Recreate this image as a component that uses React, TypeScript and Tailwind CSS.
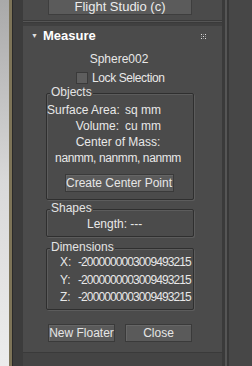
import React from "react";

const font = { fontFamily: '"Liberation Sans", Arial, sans-serif' };

function Group({ title, children, className = "" }: { title: string; children: React.ReactNode; className?: string }) {
  return (
    <div className={`relative ml-[23px] w-[148px] border border-[#2f2f2f] rounded-[2px] shadow-[inset_1px_1px_0_#5c5c5c,1px_1px_0_#5c5c5c] ${className}`}>
      <span className="absolute -top-[9px] left-[3px] bg-[#4b4b4b] px-[1px] leading-[14px] text-[#e4e4e4]">{title}</span>
      {children}
    </div>
  );
}

function Btn({ children, className = "" }: { children: React.ReactNode; className?: string }) {
  return (
    <div className={`h-[18px] bg-[#5a5a5a] border border-[#3a3a3a] shadow-[inset_1px_1px_0_#666] flex items-center justify-center text-[#e6e6e6] ${className}`}>
      {children}
    </div>
  );
}

export default function App() {
  return (
    <div className="w-[252px] h-[366px] flex overflow-hidden text-[12px] bg-[#454545]" style={font}>
      {/* left desktop strip */}
      <div className="w-[9px] h-full bg-gradient-to-b from-[#a9a9a9] via-[#d9d9d9] to-[#ececec]" />
      <div className="w-[3px] h-full bg-[#7d7458]" />
      <div className="w-[11px] h-full bg-[#3c3c3c] border-l border-[#2a2a2a]" />

      {/* panel */}
      <div className="w-[199px] h-full flex flex-col bg-[#4b4b4b]">
        <div className="h-[20px] pl-[25px]">
          <div className="w-[144px] h-[15px] bg-[#5b5b5b] border-x border-b border-[#3e3e3e] flex items-center justify-center text-[13px] text-[#ececec]">
            Flight Studio (c)
          </div>
        </div>
        <div className="h-[3px] border-y border-[#3a3a3a] bg-[#555]" />
        <div className="h-[3px] bg-[#404040]" />

        <div className="h-[18px] flex items-center pl-[8px] pr-[16px] mt-[1px]">
          <span className="text-[7px] text-[#ddd] mr-[5px]">▼</span>
          <span className="font-bold text-[13px] text-white">Measure</span>
          <div className="ml-auto grid grid-cols-3 gap-[1px]">
            {Array.from({ length: 9 }).map((_, i) => (
              <div key={i} className={`w-[1px] h-[1px] ${i % 2 ? "bg-[#888]" : "bg-[#ddd]"}`} />
            ))}
          </div>
        </div>

        <div className="text-center text-[#e8e8e8] mt-[7px] leading-[14px] pr-[7px]">Sphere002</div>
        <div className="flex items-center mt-[3px] pl-[53px]">
          <div className="w-[12px] h-[12px] bg-[#5e5e5e] border border-[#3a3a3a] mr-[4px]" />
          <span className="text-[#e8e8e8] tracking-[-0.4px]">Lock Selection</span>
        </div>

        <Group title="Objects" className="mt-[6px] h-[107px] pt-[8px]">
          <div className="flex flex-col items-center text-[#e8e8e8] leading-[16px]">
            <div className="w-full flex whitespace-nowrap">
              <span className="w-[72px] text-right">Surface Area:</span>
              <span className="ml-[6px]">sq mm</span>
            </div>
            <div className="w-full flex whitespace-nowrap">
              <span className="w-[72px] text-right">Volume:</span>
              <span className="ml-[6px]">cu mm</span>
            </div>
            <div className="pr-[4px]">Center of Mass:</div>
            <div className="whitespace-nowrap tracking-[-0.4px] pr-[4px]">nanmm, nanmm, nanmm</div>
            <Btn className="w-[109px] mt-[8px] mr-[2px]">Create Center Point</Btn>
          </div>
        </Group>

        <Group title="Shapes" className="mt-[9px] h-[28px] pt-[7px]">
          <div className="pl-[40px] text-[#e8e8e8] leading-[14px]">Length: ---</div>
        </Group>

        <Group title="Dimensions" className="mt-[11px] h-[62px] pt-[5px]">
          <div className="flex flex-col text-[#e8e8e8] leading-[17.5px]">
            {["X:", "Y:", "Z:"].map((k) => (
              <div key={k} className="flex">
                <span className="w-[31px] pl-[13px]">{k}</span>
                <span className="tracking-[-0.9px] whitespace-nowrap">-2000000003009493215</span>
              </div>
            ))}
          </div>
        </Group>

        <div className="flex gap-[10px] ml-[25px] mt-[14px]">
          <Btn className="w-[67px]">New Floater</Btn>
          <Btn className="w-[67px]">Close</Btn>
        </div>

        <div className="mt-auto h-[14px] border-t border-[#3a3a3a] bg-[#444]" />
      </div>

      {/* right strip */}
      <div className="w-[3px] h-full bg-[#3a3a3a]" />
      <div className="w-[2px] h-full bg-[#555]" />
      <div className="w-[2px] h-full bg-[#383838]" />
      <div className="flex-1 h-full bg-[#474747]" />
    </div>
  );
}
